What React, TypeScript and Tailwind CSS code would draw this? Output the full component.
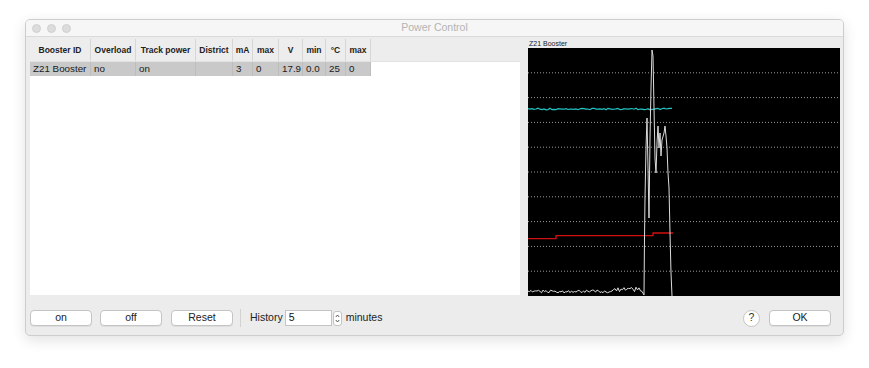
import React from "react";

const cols = [
  { h: "Booster ID", w: 61, v: "Z21 Booster" },
  { h: "Overload", w: 45, v: "no" },
  { h: "Track power", w: 60, v: "on" },
  { h: "District", w: 37, v: "" },
  { h: "mA", w: 20, v: "3" },
  { h: "max", w: 26, v: "0" },
  { h: "V", w: 24, v: "17.9" },
  { h: "min", w: 23, v: "0.0" },
  { h: "°C", w: 20, v: "25" },
  { h: "max", w: 25, v: "0" },
];

function rnd(i: number) {
  const x = Math.sin(i * 12.9898 + 78.233) * 43758.5453;
  return x - Math.floor(x);
}

function Chart() {
  const W = 312;
  const H = 248;
  const grid = Array.from({ length: 9 }, (_, k) => (k + 1) * 24.8);
  const cyan: string[] = [];
  for (let x = 0; x <= 145; x += 2) {
    cyan.push(`${x},${(61 + (rnd(x) - 0.5) * 1.6).toFixed(1)}`);
  }
  const white: string[] = [];
  for (let x = 0; x <= 115; x += 1.5) {
    let y = 245 - rnd(x + 100) * 3;
    if (x > 85 && x < 112) y = 244 - rnd(x + 7) * 5;
    white.push(`${x.toFixed(1)},${y.toFixed(1)}`);
  }
  const spike = [
    [116, 247], [116.5, 190], [117, 150], [118, 100], [119, 70], [120, 120],
    [121, 170], [122, 90], [123, 40], [124, 2], [125, 8], [126, 60], [127, 110],
    [128, 125], [129, 95], [130, 78], [131, 100], [132, 85], [133, 108], [134, 92],
    [136, 85], [137, 78], [138, 88], [139, 100], [140, 125], [141, 140], [142, 185],
    [143, 225], [144, 248],
  ];
  spike.forEach(([x, y]) => white.push(`${x},${y}`));
  return (
    <svg width={W} height={H} viewBox={`0 0 ${W} ${H}`} className="block">
      <rect width={W} height={H} fill="#000" />
      {grid.map((y) => (
        <line key={y} x1={0} x2={W} y1={y} y2={y} stroke="#9a9a9a" strokeWidth={1} strokeDasharray="1 2" />
      ))}
      <polyline points={cyan.join(" ")} fill="none" stroke="#22c4c4" strokeWidth={1.2} />
      <polyline points="0,190.7 28,190.7 28,187.7 125,187.7 125,185 145,185" fill="none" stroke="#d01010" strokeWidth={1.3} />
      <polyline points={white.join(" ")} fill="none" stroke="#dcdcdc" strokeWidth={1} />
    </svg>
  );
}

function Btn({ children, w }: { children: React.ReactNode; w: string }) {
  return (
    <div className={`${w} h-[16px] rounded-[4px] border border-[#c4c4c4] bg-white shadow-[0_1px_0_rgba(0,0,0,0.06)] flex items-center justify-center text-[10.5px] text-[#222]`}>
      {children}
    </div>
  );
}

export default function App() {
  return (
    <div
      className="w-[869px] h-[368px] bg-white pt-[19px] pl-[25px]"
      style={{ fontFamily: '"Liberation Sans", Arial, sans-serif' }}
    >
      <div className="w-[819px] h-[317px] rounded-[5px] border border-[#cdcdcd] bg-[#ececec] shadow-[0_4px_14px_rgba(0,0,0,0.12)] flex flex-col overflow-hidden">
        <div className="relative h-[17px] bg-[#f6f6f6] border-b border-[#dadada] flex items-center shrink-0">
          <div className="flex gap-[6px] pl-[6px]">
            <div className="w-[9px] h-[9px] rounded-full bg-[#dcdcdc] border border-[#d0d0d0]" />
            <div className="w-[9px] h-[9px] rounded-full bg-[#dcdcdc] border border-[#d0d0d0]" />
            <div className="w-[9px] h-[9px] rounded-full bg-[#dcdcdc] border border-[#d0d0d0]" />
          </div>
          <div className="absolute inset-0 flex items-center justify-center text-[10.5px] text-[#b4b4b4]">
            Power Control
          </div>
        </div>
        <div className="flex pl-[4px] pt-[2px] gap-[8px]">
          <div className="w-[490px] h-[256px] bg-white flex flex-col">
            <div className="h-[23px] bg-[#ededed] flex border-b border-[#e2e2e2]">
              {cols.map((c, i) => (
                <div
                  key={i}
                  style={{ width: c.w }}
                  className="shrink-0 border-r border-[#d6d6d6] flex items-center justify-center text-[8.5px] font-bold text-[#222] whitespace-nowrap"
                >
                  {c.h}
                </div>
              ))}
            </div>
            <div className="h-[14px] flex">
              {cols.map((c, i) => (
                <div
                  key={i}
                  style={{ width: c.w }}
                  className="shrink-0 bg-[#c9c9c9] border-r border-[#bdbdbd] flex items-center pl-[3px] text-[9.8px] text-[#1a1a1a] whitespace-nowrap"
                >
                  {c.v}
                </div>
              ))}
            </div>
          </div>
          <div className="flex flex-col">
            <div className="h-[9px] text-[7px] leading-[9px] text-[#222] pl-[1px]">Z21 Booster</div>
            <Chart />
          </div>
        </div>
        <div className="flex items-center pl-[4px] pt-[13px] pr-[12px]">
          <Btn w="w-[62px]">on</Btn>
          <div className="w-[8px]" />
          <Btn w="w-[62px]">off</Btn>
          <div className="w-[9px]" />
          <Btn w="w-[62px]">Reset</Btn>
          <div className="w-[8px] h-[18px] border-r border-[#d2d2d2] mr-[9px]" />
          <span className="text-[10.5px] text-[#222] mr-[2px]">History</span>
          <div className="w-[47px] h-[16px] bg-white border border-[#c4c4c4] text-[10.5px] text-[#111] flex items-center pl-[3px]">5</div>
          <div className="ml-[1px] w-[9px] h-[15px] rounded-[3px] bg-white border border-[#c4c4c4] flex flex-col items-center justify-center">
            <svg width="5" height="11" viewBox="0 0 5 11">
              <path d="M0.8 4 L2.5 2 L4.2 4" fill="none" stroke="#444" strokeWidth="0.9" />
              <path d="M0.8 7 L2.5 9 L4.2 7" fill="none" stroke="#444" strokeWidth="0.9" />
            </svg>
          </div>
          <span className="ml-[4px] text-[10.5px] text-[#222]">minutes</span>
          <div className="flex-1" />
          <div className="w-[17px] h-[17px] rounded-full bg-white border border-[#c4c4c4] flex items-center justify-center text-[10.5px] text-[#333] mr-[9px]">?</div>
          <Btn w="w-[62px]">OK</Btn>
        </div>
      </div>
    </div>
  );
}
